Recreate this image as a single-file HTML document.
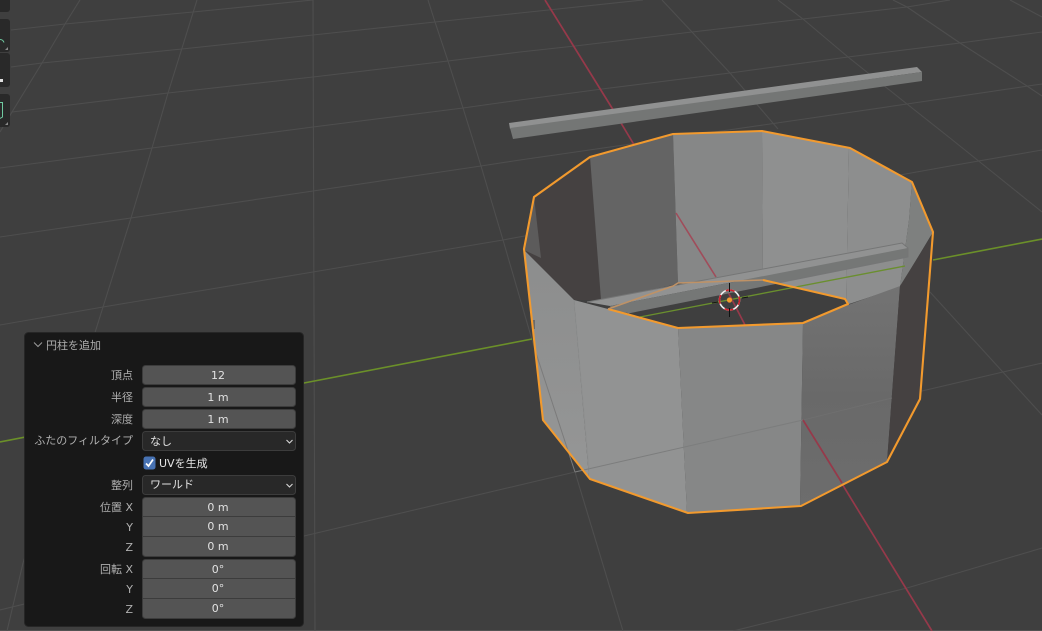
<!DOCTYPE html>
<html><head><meta charset="utf-8"><style>
html,body{margin:0;padding:0;background:#3f3f3f;overflow:hidden}
svg{display:block;filter:blur(.35px)}
text{font-family:"DejaVu Sans","Noto Sans CJK JP",sans-serif;font-size:11px}
.l{fill:#b0b0b0;text-anchor:end}
.v{fill:#e2e2e2;text-anchor:middle}
.d{fill:#e2e2e2}
.f{fill:#545454;stroke:#3c3c3c;stroke-width:1}
.s{stroke:#3c3c3c;stroke-width:1}
.g{fill:none;stroke:#4e4e4e;stroke-width:1.1}
</style></head><body>
<svg width="1042" height="631" viewBox="0 0 1042 631" xmlns="http://www.w3.org/2000/svg">
<defs>
<linearGradient id="fa" x1="0" y1="0" x2="0" y2="1"><stop offset="0" stop-color="#8c8d8d"/><stop offset="1" stop-color="#959696"/></linearGradient>
<linearGradient id="fd" x1="0" y1="0" x2="0" y2="1"><stop offset="0" stop-color="#737373"/><stop offset=".5" stop-color="#696969"/><stop offset="1" stop-color="#6d6d6d"/></linearGradient>
</defs>
<rect x="-2" y="-2" width="1046" height="635" fill="#3f3f3f"/>
<rect y="630" width="1042" height="2" fill="#525252"/>
<g class="g">
<path d="M11 30L65 24L193 12L313 0"/>
<path d="M11 67L42 63L182 49L313 35L435 22L520 13L643 0"/>
<path d="M12 112L168 93L313 77L448 61L520 52L575 46L692 32L803 19L907 7L950 0"/>
<path d="M0 168L152 148L313 127L463 108L520 100L602 89L730 73L848 57L960 43L1042 32"/>
<path d="M0 237L131 218L313 191L481 166L520 160L777 123L907 104L1028 86L1042 84"/>
<path d="M0 325L103 307L313 272L503 240L530 235M900 175L950 166L1042 150"/>
<path d="M0 610L304 536L575 472M892 398L1003 372L1042 363"/>
<path d="M733 631L907 588L1042 548"/>
<path d="M0 132L12 112L42 63L65 24L80 0"/>
<path d="M197 0L168 93L152 148L131 218L103 307L23 563L7 631"/>
<path d="M313 0L315 631"/>
<path d="M428 0L435 22L448 61L463 108L481 166L503 240L535 350M575 472L623 631"/>
<path d="M662 0L692 32L730 73L778 129M930 292L1042 415"/>
<path d="M778 0L803 19L848 57L907 104L950 138L1042 212"/>
<path d="M893 0L907 7L960 43L1027 86L1042 96"/>
<path d="M1010 0L1042 17"/>
</g>
<path d="M0 442L304 383L532 339M933 260L1042 239" stroke="#6b9029" stroke-width="1.6" fill="none"/>
<path d="M545 0L612 108L636 148M803 420L932 631" stroke="#96394a" stroke-width="1.7" fill="none"/>

<!-- top rod -->
<polygon points="509,123 917,67 922,72 510,129" fill="#909191"/>
<polygon points="510,128 922,72 922,81 513,139" fill="#747675"/>

<!-- interior walls -->
<polygon points="534,197 590,157 601,300 574,300 524,250" fill="#454141"/>
<polygon points="534,197 541,258 524,250" fill="#5c5b5b"/>
<polygon points="590,157 673,134 678,284 601,300" fill="#646464"/>
<polygon points="673,134 762,131 763,282 678,284" fill="#868787"/>
<polygon points="762,131 849,148 846,305 763,282" fill="#8f9090"/>
<polygon points="849,148 912,182 909,220 900,287 846,305" fill="#8d8e8e"/>
<polygon points="912,182 933,232 900,287 909,220" fill="#7e807f"/>
<path d="M676 213L716 277" stroke="#a04c5a" stroke-width="1.6"/>

<!-- hole -->
<polygon points="608,309 678,283 763,280 845,299 848,304 803,323 678,328" fill="#3f3f3f"/>
<path d="M640 317L905 266" stroke="#6a8f2e" stroke-width="1.4" fill="none"/>
<path d="M727 290L745 325" stroke="#96394a" stroke-width="1.7" fill="none"/>

<!-- inner rod -->
<polygon points="587,302 902,243 908,248 610,306" fill="#919292"/>
<polygon points="610,306 908,248 908,257 628,313 612,310" fill="#757776"/>
<path d="M587 302L902 243L908 248V257L628 313" stroke="#757676" stroke-width="1" fill="none"/>

<!-- cursor -->
<circle cx="729.5" cy="300" r="10" fill="none" stroke="#f0f0f0" stroke-width="1.6"/>
<circle cx="729.5" cy="300" r="10" fill="none" stroke="#d0202c" stroke-width="1.6" stroke-dasharray="9 6.7" stroke-dashoffset="4"/>
<path d="M729.5 283V292M729.5 308V317M712 303L718 302M742 298L748 297" stroke="#111" stroke-width="1" fill="none"/>
<circle cx="729.5" cy="300" r="2.6" fill="#f29a2e"/>

<!-- outer faces -->
<polygon points="524,250 574,300 589,478 543,419" fill="url(#fa)"/>
<polygon points="574,300 608,309 678,328 687,513 589,478" fill="#929393"/>
<polygon points="678,328 803,323 800,506 687,513" fill="#868787"/>
<polygon points="803,323 848,305 900,286 887,462 800,506" fill="url(#fd)"/>
<polygon points="900,286 933,233 920,400 887,462" fill="#454141"/>
<!-- x-ray lines -->
<path d="M575 472L803 420" stroke="#7c7d7d" stroke-width="1" fill="none"/>
<path d="M803 420L892 398" stroke="#6f6f6f" stroke-width="1" fill="none"/>
<path d="M535 350L575 472" stroke="#7b7b7b" stroke-width="1" fill="none"/>
<path d="M803 420L842 483" stroke="#96394a" stroke-width="1.7" fill="none"/>
<path d="M574 300L589 470" stroke="#8a8b8b" stroke-width="1" fill="none" opacity=".5"/>
<rect x="532" y="320" width="3" height="9" fill="#6a6a6a"/>

<!-- orange outline -->
<path d="M524 249L534 197L590 157L673 134L762 131L850 148L912 182L933 232L920 399L887 462L801 506L688 513L590 479L543 420Z" fill="none" stroke="#f29a2e" stroke-width="2.1" stroke-linejoin="round"/>
<path d="M608 309L678 328L803 323L848 304L845 299L763 280" fill="none" stroke="#f29a2e" stroke-width="2.1" stroke-linejoin="round"/>
<path d="M608 309L673 286L678 283L763 280" fill="none" stroke="#bf9266" stroke-width="1.6"/>

<!-- left toolbar -->
<g fill="#292929">
<rect x="-6" y="-10" width="16" height="22" rx="3"/>
<rect x="-6" y="19" width="16" height="33" rx="3"/>
<rect x="-6" y="53" width="16" height="34" rx="3"/>
<rect x="-6" y="94" width="16" height="33" rx="3"/>
</g>
<path d="M0 39.5Q3 39.5 4 42.5" stroke="#6fc9a0" stroke-width="1" fill="none"/>
<rect x="0" y="79" width="3" height="3" fill="#e0e0e0"/>
<path d="M0 102.5H2.5V117L0 118.5" stroke="#6fc9a0" stroke-width="1" fill="none"/>
<g fill="#8a8a8a">
<polygon points="8,47 8,50 5,50"/>
<polygon points="8,122 8,125 5,125"/>
</g>

<!-- panel -->
<rect x="24.5" y="332.5" width="279" height="294" rx="4" fill="#181818" stroke="#262626"/>
<path d="M34 342.5L38 346.5L42 342.5" stroke="#9a9a9a" fill="none"/>
<text x="46" y="349" fill="#aeaeae">円柱を追加</text>

<rect class="f" x="142.5" y="365.5" width="153" height="19" rx="3"/>
<rect class="f" x="142.5" y="387.5" width="153" height="19" rx="3"/>
<rect class="f" x="142.5" y="409.5" width="153" height="19" rx="3"/>
<rect x="142.5" y="431.5" width="153" height="19" rx="3" fill="#282828" stroke="#3c3c3c"/>
<rect x="142.5" y="475.5" width="153" height="19" rx="3" fill="#282828" stroke="#3c3c3c"/>
<rect class="f" x="142.5" y="497.5" width="153" height="59" rx="3"/>
<path class="s" d="M143 516.5H295M143 536.5H295"/>
<rect class="f" x="142.5" y="559.5" width="153" height="59" rx="3"/>
<path class="s" d="M143 578.5H295M143 598.5H295"/>

<text class="l" x="133" y="379">頂点</text>
<text class="l" x="133" y="401">半径</text>
<text class="l" x="133" y="423">深度</text>
<text class="l" x="133" y="444">ふたのフィルタイプ</text>
<text class="l" x="133" y="489">整列</text>
<text class="l" x="133" y="511">位置 X</text>
<text class="l" x="133" y="531">Y</text>
<text class="l" x="133" y="551">Z</text>
<text class="l" x="133" y="573">回転 X</text>
<text class="l" x="133" y="593">Y</text>
<text class="l" x="133" y="613">Z</text>

<text class="v" x="218" y="379">12</text>
<text class="v" x="218" y="401">1 m</text>
<text class="v" x="218" y="423">1 m</text>
<text class="d" x="150" y="445">なし</text>
<text class="d" x="150" y="488">ワールド</text>
<text class="v" x="218" y="511">0 m</text>
<text class="v" x="218" y="530">0 m</text>
<text class="v" x="218" y="550">0 m</text>
<text class="v" x="218" y="573">0°</text>
<text class="v" x="218" y="592">0°</text>
<text class="v" x="218" y="612">0°</text>

<path d="M286.5 440L289.5 443L292.5 440M286.5 484L289.5 487L292.5 484" stroke="#d8d8d8" stroke-width="1.1" fill="none"/>

<rect x="143.5" y="456.5" width="12" height="13" rx="2.5" fill="#4772b3"/>
<path d="M146 463.5L148.5 466L153 459.5" stroke="#fff" stroke-width="1.7" fill="none"/>
<text x="159" y="467" fill="#e6e6e6">UVを生成</text>
</svg>
</body></html>
